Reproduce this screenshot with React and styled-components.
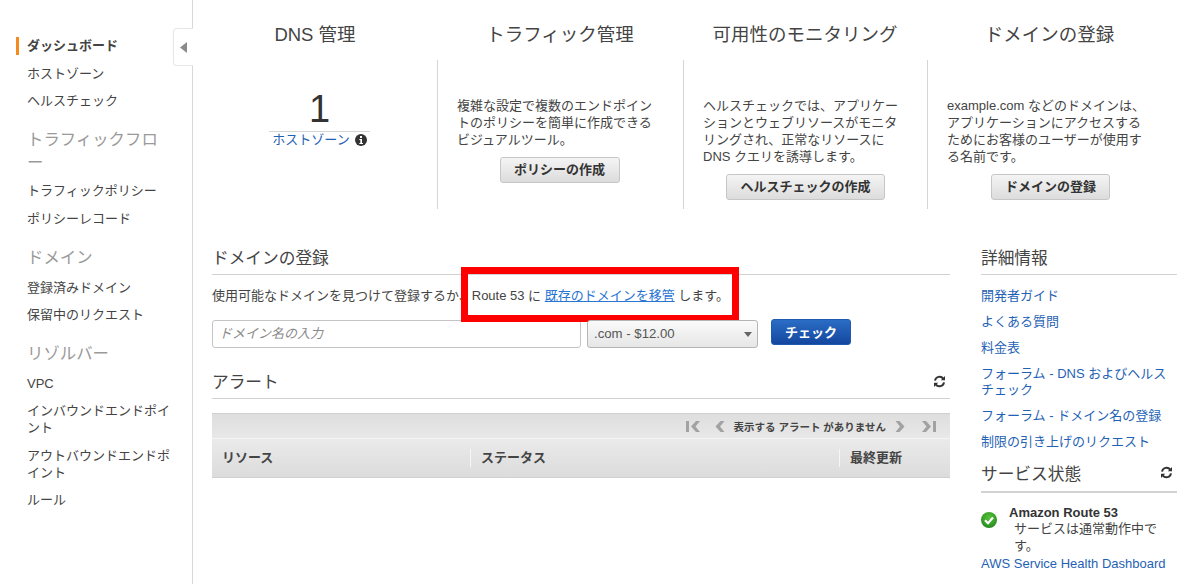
import React from "react";
import styled, { createGlobalStyle } from "styled-components";

const FONT = '"Liberation Sans", "Noto Sans CJK JP", sans-serif';

const Global = createGlobalStyle`
  html, body { margin: 0; padding: 0; background: #fff; }
  body { font-family: ${FONT}; color: #444; overflow: hidden; }
  * { box-sizing: border-box; }
`;

const Page = styled.div`
  display: flex;
  width: 1200px;
  height: 584px;
  overflow: hidden;
`;

const Sidebar = styled.nav`
  position: relative;
  flex: none;
  width: 193px;
  height: 584px;
  border-right: 1px solid #d8d8d8;
  padding: 37px 20px 0 27px;
`;

const CollapseTab = styled.div`
  position: absolute;
  top: 28px;
  right: -1px;
  width: 20px;
  height: 38px;
  background: #fff;
  border: 1px solid #e6e6e6;
  border-right: none;
  border-radius: 4px 0 0 4px;
  display: flex;
  align-items: center;
  justify-content: center;
`;

const NavItem = styled.a`
  position: relative;
  display: block;
  font-size: 13px;
  line-height: 17px;
  margin-bottom: ${(p) => p.$gap ?? 10.5}px;
  color: #444;
  font-weight: ${(p) => (p.$active ? 700 : 400)};
  &::before {
    content: ${(p) => (p.$active ? '""' : "none")};
    position: absolute;
    left: -11px;
    top: 0;
    width: 3px;
    height: 18px;
    background: #f58b1f;
  }
`;

const NavGroup = styled.div`
  font-size: 16.4px;
  line-height: 23px;
  color: #9a9a9a;
  margin: ${(p) => p.$top}px 0 ${(p) => p.$bottom}px;
`;

const Content = styled.main`
  flex: 1;
  min-width: 0;
  display: flex;
  flex-direction: column;
`;

const Overview = styled.section`
  display: grid;
  grid-template-columns: 244px 246px 244px 245px;
  height: 236px;
  padding-top: 22px;
`;

const OverviewCol = styled.div`
  display: flex;
  flex-direction: column;
`;

const OverviewTitle = styled.h2`
  margin: 0;
  height: 38px;
  font-size: 18.5px;
  font-weight: 400;
  line-height: 25px;
  text-align: center;
  color: #444;
`;

const OverviewBody = styled.div`
  height: 149px;
  border-left: ${(p) => (p.$first ? "none" : "1px solid #d5d5d5")};
  display: flex;
  flex-direction: column;
  align-items: ${(p) => (p.$first ? "center" : "stretch")};
  padding: ${(p) => p.$top}px 20px 0 ${(p) => (p.$first ? 29 : 19)}px;
`;

const Figure = styled.div`
  font-size: 38px;
  line-height: 44px;
  color: #333;
  text-align: center;
`;

const FigureLabel = styled.div`
  width: 101px;
  border-top: 1px solid #d5d5d5;
  font-size: 13px;
  line-height: 16px;
  text-align: center;
  color: #1f62b5;
  white-space: nowrap;
  display: flex;
  justify-content: center;
  align-items: center;
  gap: 5px;
`;

const Blurb = styled.p`
  margin: 0 0 8.500px;
  font-size: 13px;
  line-height: 17px;
  color: #444;
  white-space: pre-line;
`;

const GreyButton = styled.button`
  align-self: center;
  margin: 0;
  height: 26px;
  padding: 0 0 2px;
  width: ${(p) => p.$w}px;
  margin-left: ${(p) => p.$shift ?? 0}px;
  font-family: ${FONT};
  font-size: 13px;
  font-weight: 700;
  color: #333;
  background: linear-gradient(#f4f4f4, #dcdcdc);
  border: 1px solid #c6c6c6;
  border-radius: 3px;
  white-space: nowrap;
`;

const Lower = styled.div`
  display: flex;
  align-items: flex-start;
  padding-left: 19px;
`;

const MainCol = styled.div`
  flex: none;
  width: 738px;
`;

const Aside = styled.aside`
  flex: none;
  width: 196px;
  margin-left: 31px;
`;

const SectionHead = styled.div`
  display: flex;
  align-items: center;
  justify-content: space-between;
  height: ${(p) => p.$h ?? 39}px;
  margin-top: ${(p) => p.$top ?? 0}px;
  padding: ${(p) => (p.$raised ? "0 4px 4px 0" : "4px 4px 0 0")};
  border-bottom: ${(p) => p.$line ?? 1}px solid #d2d2d2;
  font-size: 16.7px;
  color: #444;
`;

const IntroRow = styled.div`
  position: relative;
  height: 45px;
  padding-top: 12px;
  font-size: 13px;
  line-height: 18px;
  color: #444;
  white-space: nowrap;
`;

const IntroLink = styled.a`
  color: #2a74d4;
  text-decoration: underline;
`;

const RedBox = styled.div`
  position: absolute;
  left: 249px;
  top: -8px;
  width: 278px;
  height: 55px;
  border: 7px solid #fe0000;
`;

const SearchRow = styled.div`
  display: flex;
  align-items: flex-start;
`;

const DomainInput = styled.div`
  width: 369px;
  height: 28px;
  border: 1px solid #c4c4c4;
  border-radius: 3px;
  padding-left: 6px;
  font-size: 13px;
  line-height: 25px;
  font-style: italic;
  color: #8a8a8a;
  background: #fff;
`;

const TldSelect = styled.div`
  position: relative;
  width: 171px;
  height: 28px;
  margin-left: 6px;
  border: 1px solid #b5b5b5;
  border-radius: 3px;
  padding-left: 6px;
  font-size: 13.2px;
  line-height: 26px;
  color: #555;
  background: linear-gradient(#fafafa, #e6e6e6);
  &::after {
    content: "";
    position: absolute;
    right: 5px;
    top: 11px;
    border-left: 4px solid transparent;
    border-right: 4px solid transparent;
    border-top: 5px solid #666;
  }
`;

const BlueButton = styled.button`
  width: 80px;
  height: 26px;
  margin: -1px 0 0 13px;
  padding: 0 0 2px;
  font-family: ${FONT};
  font-size: 13px;
  font-weight: 700;
  color: #fff;
  background: linear-gradient(#2b6dc5, #14479f);
  border: 1px solid #1e5bb0;
  border-radius: 3px;
`;

const Table = styled.div`
  margin-top: 14px;
  background: #e4e4e4;
`;

const Pager = styled.div`
  display: flex;
  align-items: center;
  justify-content: flex-end;
  height: 26px;
  padding-right: 14px;
  border-top: 1px solid #cfcfcf;
  border-bottom: 1px solid #f4f4f4;
  background: linear-gradient(#dedede, #e8e8e8);
  font-size: 10.5px;
  font-weight: 700;
  color: #444;
`;

const PagerText = styled.span`
  margin: 0 9px 0 8px;
`;

const PagerIcon = styled.svg`
  margin-left: ${(p) => p.$left ?? 0}px;
  display: block;
`;

const HeaderRow = styled.div`
  display: grid;
  grid-template-columns: 258px 369px 1fr;
  align-items: center;
  height: 39px;
  border-bottom: 1px solid #cfcfcf;
  background: linear-gradient(#eaeaea, #dcdcdc);
`;

const HeaderCell = styled.div`
  font-size: 13px;
  font-weight: 700;
  color: #444;
  line-height: 18px;
  padding-left: 10px;
  border-left: ${(p) => (p.$first ? "none" : "1px solid #f6f6f6")};
`;

const AsideLinks = styled.div`
  padding-top: 13px;
`;

const AsideLink = styled.a`
  display: block;
  font-size: 13px;
  line-height: 16px;
  color: #1f62b5;
  margin-bottom: 10px;
`;

const Status = styled.div`
  position: relative;
  padding: 11px 0 0 28px;
  font-size: 13px;
  line-height: 16.5px;
`;

const StatusIcon = styled.svg`
  position: absolute;
  left: 0;
  top: 19px;
`;

const StatusTitle = styled.div`
  font-weight: 700;
  color: #333;
  line-height: 17px;
`;

const StatusText = styled.div`
  padding-left: 5px;
  padding-right: 8px;
  color: #444;
`;

const StatusLink = styled.a`
  display: block;
  margin: 2px 0 0 -28px;
  color: #1f62b5;
  white-space: nowrap;
  line-height: 16px;
`;

const Refresh = () => (
  <svg width="13" height="13" viewBox="0 0 16 16" fill="none" stroke="#333" strokeWidth="2.4">
    <path d="M2.5 7A5.6 5.6 0 0 1 12.6 4.4" />
    <path d="M13.5 9A5.6 5.6 0 0 1 3.4 11.6" />
    <path d="M14.8 1.2v5.2H9.6z" fill="#333" stroke="none" />
    <path d="M1.2 14.8V9.6h5.2z" fill="#333" stroke="none" />
  </svg>
);

const First = () => (
  <PagerIcon width="15" height="13" viewBox="0 0 15 13" fill="#a2a2a2">
    <rect x="0" y="1" width="3" height="11" />
    <path d="M10 1h4L9.5 6.5 14 12h-4L5 6.5z" />
  </PagerIcon>
);
const Prev = () => (
  <PagerIcon $left={14} width="10" height="13" viewBox="0 0 10 13" fill="#a2a2a2">
    <path d="M5.5 1h4L5 6.5 9.5 12h-4L.5 6.5z" />
  </PagerIcon>
);
const Next = () => (
  <PagerIcon width="10" height="13" viewBox="0 0 10 13" fill="#a2a2a2">
    <path d="M4.5 1h-4L5 6.5.5 12h4l5-5.5z" />
  </PagerIcon>
);
const Last = () => (
  <PagerIcon $left={16} width="15" height="13" viewBox="0 0 15 13" fill="#a2a2a2">
    <rect x="12" y="1" width="3" height="11" />
    <path d="M5 1H1l4.5 5.5L1 12h4l5-5.5z" />
  </PagerIcon>
);

export default function App() {
  return (
    <Page>
      <Global />
      <Sidebar>
        <CollapseTab>
          <svg width="7" height="11" viewBox="0 0 7 11"><path d="M7 0v11L0 5.5z" fill="#8b8b8b" /></svg>
        </CollapseTab>
        <NavItem $active>ダッシュボード</NavItem>
        <NavItem>ホストゾーン</NavItem>
        <NavItem $gap={0}>ヘルスチェック</NavItem>
        <NavGroup $top={19} $bottom={8}>トラフィックフロー</NavGroup>
        <NavItem>トラフィックポリシー</NavItem>
        <NavItem $gap={0}>ポリシーレコード</NavItem>
        <NavGroup $top={19} $bottom={10}>ドメイン</NavGroup>
        <NavItem>登録済みドメイン</NavItem>
        <NavItem $gap={0}>保留中のリクエスト</NavItem>
        <NavGroup $top={19} $bottom={10}>リゾルバー</NavGroup>
        <NavItem $gap={10}>VPC</NavItem>
        <NavItem>インバウンドエンドポイント</NavItem>
        <NavItem>アウトバウンドエンドポイント</NavItem>
        <NavItem>ルール</NavItem>
      </Sidebar>
      <Content>
        <Overview>
          <OverviewCol>
            <OverviewTitle>DNS 管理</OverviewTitle>
            <OverviewBody $first $top={27}>
              <Figure>1</Figure>
              <FigureLabel>
                ホストゾーン
                <svg width="12" height="12" viewBox="0 0 12 12">
                  <circle cx="6" cy="6" r="6" fill="#333" />
                  <rect x="5" y="2" width="2" height="2" fill="#fff" />
                  <path d="M4.3 5h2.700v4h1v1H4.300V9h1V6h-1z" fill="#fff" />
                </svg>
              </FigureLabel>
            </OverviewBody>
          </OverviewCol>
          <OverviewCol>
            <OverviewTitle>トラフィック管理</OverviewTitle>
            <OverviewBody $top={37}>
              <Blurb>{"複雑な設定で複数のエンドポイン\nトのポリシーを簡単に作成できる\nビジュアルツール。"}</Blurb>
              <GreyButton $w={120} $shift={-1}>ポリシーの作成</GreyButton>
            </OverviewBody>
          </OverviewCol>
          <OverviewCol>
            <OverviewTitle>可用性のモニタリング</OverviewTitle>
            <OverviewBody $top={37}>
              <Blurb>{"ヘルスチェックでは、アプリケー\nションとウェブリソースがモニタ\nリングされ、正常なリソースに\nDNS クエリを誘導します。"}</Blurb>
              <GreyButton $w={159} $shift={1}>ヘルスチェックの作成</GreyButton>
            </OverviewBody>
          </OverviewCol>
          <OverviewCol>
            <OverviewTitle>ドメインの登録</OverviewTitle>
            <OverviewBody $top={37}>
              <Blurb>{"example.com などのドメインは、\nアプリケーションにアクセスする\nためにお客様のユーザーが使用す\nる名前です。"}</Blurb>
              <GreyButton $w={119} $shift={2}>ドメインの登録</GreyButton>
            </OverviewBody>
          </OverviewCol>
        </Overview>
        <Lower>
          <MainCol>
            <SectionHead>ドメインの登録</SectionHead>
            <IntroRow>
              使用可能なドメインを見つけて登録するか、Route 53 に <IntroLink>既存のドメインを移管</IntroLink> します。
              <RedBox />
            </IntroRow>
            <SearchRow>
              <DomainInput>ドメイン名の入力</DomainInput>
              <TldSelect>.com - $12.00</TldSelect>
              <BlueButton>チェック</BlueButton>
            </SearchRow>
            <SectionHead $top={12}>
              アラート
              <Refresh />
            </SectionHead>
            <Table>
              <Pager>
                <First />
                <Prev />
                <PagerText>表示する アラート がありません</PagerText>
                <Next />
                <Last />
              </Pager>
              <HeaderRow>
                <HeaderCell $first>リソース</HeaderCell>
                <HeaderCell>ステータス</HeaderCell>
                <HeaderCell>最終更新</HeaderCell>
              </HeaderRow>
            </Table>
          </MainCol>
          <Aside>
            <SectionHead>詳細情報</SectionHead>
            <AsideLinks>
              <AsideLink>開発者ガイド</AsideLink>
              <AsideLink>よくある質問</AsideLink>
              <AsideLink>料金表</AsideLink>
              <AsideLink>フォーラム - DNS およびヘルスチェック</AsideLink>
              <AsideLink>フォーラム - ドメイン名の登録</AsideLink>
              <AsideLink>制限の引き上げのリクエスト</AsideLink>
            </AsideLinks>
            <SectionHead $h={35} $line={2} $top={-2} $raised>
              サービス状態
              <Refresh />
            </SectionHead>
            <Status>
              <StatusIcon width="16" height="16" viewBox="0 0 16 16">
                <defs>
                  <radialGradient id="okGreen" cx="50%" cy="35%" r="70%">
                    <stop offset="0%" stopColor="#58c23a" />
                    <stop offset="100%" stopColor="#23861f" />
                  </radialGradient>
                </defs>
                <circle cx="8" cy="8" r="8" fill="url(#okGreen)" />
                <path d="M4 8.2l3 3 5-5.6" fill="none" stroke="#fff" strokeWidth="2.2" />
              </StatusIcon>
              <StatusTitle>Amazon Route 53</StatusTitle>
              <StatusText>サービスは通常動作中です。</StatusText>
              <StatusLink>AWS Service Health Dashboard</StatusLink>
            </Status>
          </Aside>
        </Lower>
      </Content>
    </Page>
  );
}
